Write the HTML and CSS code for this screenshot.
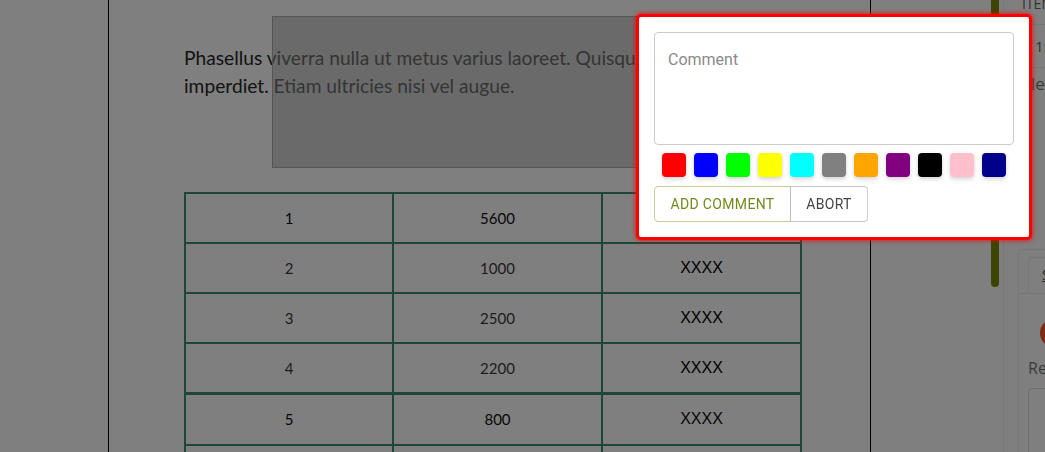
FILE: index.html
```html
<!DOCTYPE html>
<html lang="en">
<head>
<meta charset="utf-8">
<title>Comment editor</title>
<link rel="stylesheet" href="styles.css">
</head>
<body>
<div class="app">
  <aside class="left-pane"></aside>

  <main class="doc">
    <div class="highlight"></div>
    <p class="doc-text">Phasellus viverra nulla ut metus varius laoreet. Quisque rutrum. Aenean imperdiet. Etiam ultricies nisi vel augue.</p>
    <table class="grid">
      <colgroup><col class="c1"><col class="c2"><col class="c3"></colgroup>
      <tbody>
        <tr class="strong"><td>1</td><td>5600</td><td class="x"></td></tr>
        <tr><td>2</td><td>1000</td><td class="x">XXXX</td></tr>
        <tr><td>3</td><td>2500</td><td class="x">XXXX</td></tr>
        <tr><td>4</td><td>2200</td><td class="x">XXXX</td></tr>
        <tr class="strong split"><td>5</td><td>800</td><td class="x">XXXX</td></tr>
        <tr><td></td><td></td><td class="x"></td></tr>
      </tbody>
    </table>
  </main>

  <div class="rail"><div class="rail-bar"></div></div>

  <aside class="side">
    <div class="list">
      <div class="list-row head"><span>ITEM</span></div>
      <div class="list-row num"><span>1:</span></div>
      <div class="list-row desc"><span>level</span></div>
    </div>
    <div class="card">
      <div class="tabs"><div class="tab"><span>Summary</span></div></div>
      <div class="card-body">
        <div class="avatar"></div>
        <div class="label">Reply</div>
        <div class="reply-box"></div>
      </div>
    </div>
  </aside>
</div>

<div class="backdrop"></div>

<div class="popup">
  <textarea class="comment" placeholder="Comment"></textarea>
  <div class="swatches">
    <span class="swatch" style="background:#ff0000"></span>
    <span class="swatch" style="background:#0000ff"></span>
    <span class="swatch" style="background:#00ff00"></span>
    <span class="swatch" style="background:#ffff00"></span>
    <span class="swatch" style="background:#00ffff"></span>
    <span class="swatch" style="background:#808080"></span>
    <span class="swatch" style="background:#ffa500"></span>
    <span class="swatch" style="background:#800080"></span>
    <span class="swatch" style="background:#000000"></span>
    <span class="swatch" style="background:#ffc0cb"></span>
    <span class="swatch" style="background:#00008b"></span>
  </div>
  <div class="actions">
    <button class="btn btn-add">Add comment</button>
    <button class="btn btn-abort">Abort</button>
  </div>
</div>
</body>
</html>
```

FILE: styles.css
```css
* { box-sizing: border-box; }

html, body {
  margin: 0;
  padding: 0;
  width: 1045px;
  height: 452px;
  overflow: hidden;
  background: #ffffff;
  font-family: "Lato", "Open Sans", sans-serif;
}

.app {
  display: flex;
  height: 452px;
}

.left-pane {
  width: 109px;
  flex: none;
  border-right: 1px solid #000;
}

.doc {
  position: relative;
  width: 762px;
  flex: none;
  border-right: 1px solid #000;
  padding: 44px 0 0 75px;
}

.highlight {
  position: absolute;
  left: 163px;
  top: 16px;
  width: 440px;
  height: 152px;
  background: rgba(170, 170, 170, 0.5);
  border: 1px solid #aaaaaa;
  z-index: 1;
}

.doc-text {
  margin: 0;
  width: 618px;
  font-size: 19.2px;
  line-height: 28px;
  color: #262626;
}

.grid {
  margin-top: 92px;
  width: 616px;
  border-collapse: collapse;
  table-layout: fixed;
}

.grid col.c1 { width: 208px; }
.grid col.c2 { width: 209px; }
.grid col.c3 { width: 199px; }

.grid td {
  height: 50px;
  padding: 0;
  border: 2px solid #3f8f6f;
  text-align: center;
  vertical-align: middle;
  font-size: 15px;
  color: #3a3a3a;
}

.grid tr.strong td { color: #111; }
.grid tr.split td { border-top-width: 3px; height: 52px; }

.grid td.x {
  font-family: "Liberation Sans", Arial, sans-serif;
  font-size: 16px;
  color: #000;
}

.rail {
  width: 132px;
  flex: none;
  padding-left: 120px;
}

.rail-bar {
  width: 8px;
  height: 287px;
  background: #788800;
  border-radius: 0 0 4px 4px;
}

.side {
  flex: 1;
  min-width: 0;
  overflow: hidden;
  border-left: 1px solid #eeeeee;
  font-family: "Open Sans", sans-serif;
  color: #777;
}

.list {
  height: 253px;
}

.list-row {
  border-bottom: 1px solid #eeeeee;
  white-space: nowrap;
  font-size: 14px;
}

.list-row.head {
  height: 29px;
  padding-left: 18px;
}
.list-row.head span {
  display: block;
  line-height: 16px;
  margin-top: -4px;
  color: #666;
}

.list-row.num {
  height: 43px;
  padding-left: 31px;
  line-height: 42px;
  font-size: 15px;
  color: #666;
}

.list-row.desc {
  border-bottom: none;
  padding: 4px 0 0 27px;
  font-size: 17px;
  line-height: 24px;
  color: #777;
}

.card {
  width: 300px;
  margin-left: 14px;
  border: 1px solid #eeeeee;
  border-radius: 3px;
}

.tabs {
  padding: 7px 0 0 9px;
  border-bottom: 1px solid #eeeeee;
}

.tab {
  width: 120px;
  height: 36px;
  border: 1px solid #eeeeee;
  border-bottom: none;
  border-radius: 4px 4px 0 0;
  padding: 6px 0 0 13px;
  font-size: 15px;
  color: #555;
}
.tab span { text-decoration: underline; }

.card-body {
  padding: 25px 0 0 9px;
}

.avatar {
  width: 28px;
  height: 28px;
  margin-left: 12px;
  border-radius: 50%;
  background: #ff5722;
}

.label {
  margin-top: 9px;
  font-size: 16px;
  line-height: 24px;
  color: #777;
}

.reply-box {
  margin-top: 8px;
  height: 100px;
  border: 1px solid #dddddd;
  border-radius: 4px;
}

.backdrop {
  position: fixed;
  inset: 0;
  background: rgba(0, 0, 0, 0.5);
  z-index: 10;
}

.popup {
  position: absolute;
  left: 636px;
  top: 14px;
  width: 396px;
  height: 226px;
  z-index: 11;
  background: #ffffff;
  border: 3px solid #ff0000;
  border-radius: 5px;
  box-shadow: 0 0 4px 1px rgba(255, 0, 0, 0.7);
  padding: 15px;
  font-family: "Roboto", sans-serif;
}

.comment {
  display: block;
  width: 360px;
  height: 113px;
  margin: 0;
  resize: none;
  border: 1px solid #cccccc;
  border-radius: 4px;
  padding: 17px 13px;
  font-family: "Roboto", sans-serif;
  font-size: 16px;
  line-height: 19px;
  color: #333;
  outline: none;
}
.comment::placeholder { color: #8a8a8a; }

.swatches {
  display: flex;
  justify-content: center;
  gap: 8px;
  margin-top: 8px;
}

.swatch {
  width: 24px;
  height: 24px;
  border-radius: 4px;
  box-shadow: 0 2px 4px rgba(0, 0, 0, 0.18);
}

.actions {
  display: flex;
  margin-top: 9px;
}

.btn {
  height: 36px;
  margin: 0;
  padding: 0 15px;
  background: #ffffff;
  font-family: "Roboto", sans-serif;
  font-size: 14px;
  letter-spacing: 0.35px;
  text-transform: uppercase;
  cursor: pointer;
}

.btn-add {
  width: 137px;
  border: 1px solid #c9cc9f;
  border-radius: 4px 0 0 4px;
  color: #6f8a1e;
}

.btn-abort {
  width: 78px;
  border: 1px solid #cccccc;
  border-left-color: #bbbbbb;
  margin-left: -1px;
  border-radius: 0 4px 4px 0;
  color: #444;
}
```
